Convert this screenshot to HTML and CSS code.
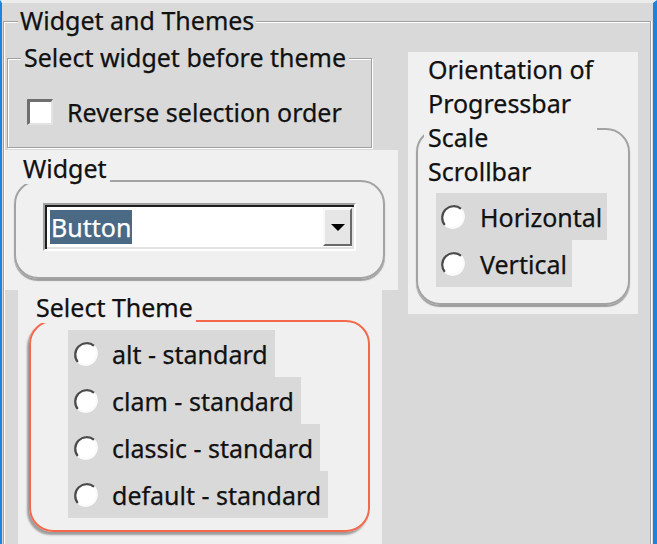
FILE: index.html
```html
<!DOCTYPE html>
<html>
<head>
<meta charset="utf-8">
<link rel="stylesheet" href="styles.css">
</head>
<body>
<div class="win">
  <div class="outer">
    <div class="outer-label">Widget and Themes</div>
    <div class="cols">
      <div class="left">
        <div class="lf1">
          <div class="lf1-label">Select widget before theme</div>
          <span class="check"></span>
          <span class="check-text">Reverse selection order</span>
        </div>
        <div class="widget-area">
          <div class="w-label">Widget</div>
          <div class="wframe">
            <div class="combo">
              <span class="sel">Button</span>
              <span class="arrow"><span class="tri"></span></span>
            </div>
          </div>
        </div>
        <div class="theme-area">
          <div class="t-label">Select Theme</div>
          <div class="tframe">
            <div class="radio"><svg width="26" height="26" viewBox="0 0 26 26"><circle cx="13" cy="13" r="11.5" fill="#fff"/><path d="M4.9 21.1A11.5 11.5 0 0 1 21.1 4.9" stroke="#4a4a4a" stroke-width="2.2" fill="none"/><path d="M21.1 4.9A11.5 11.5 0 0 1 4.9 21.1" stroke="#fafafa" stroke-width="2" fill="none"/></svg><span>alt - standard</span></div>
            <div class="radio"><svg width="26" height="26" viewBox="0 0 26 26"><circle cx="13" cy="13" r="11.5" fill="#fff"/><path d="M4.9 21.1A11.5 11.5 0 0 1 21.1 4.9" stroke="#4a4a4a" stroke-width="2.2" fill="none"/><path d="M21.1 4.9A11.5 11.5 0 0 1 4.9 21.1" stroke="#fafafa" stroke-width="2" fill="none"/></svg><span>clam - standard</span></div>
            <div class="radio"><svg width="26" height="26" viewBox="0 0 26 26"><circle cx="13" cy="13" r="11.5" fill="#fff"/><path d="M4.9 21.1A11.5 11.5 0 0 1 21.1 4.9" stroke="#4a4a4a" stroke-width="2.2" fill="none"/><path d="M21.1 4.9A11.5 11.5 0 0 1 4.9 21.1" stroke="#fafafa" stroke-width="2" fill="none"/></svg><span>classic - standard</span></div>
            <div class="radio"><svg width="26" height="26" viewBox="0 0 26 26"><circle cx="13" cy="13" r="11.5" fill="#fff"/><path d="M4.9 21.1A11.5 11.5 0 0 1 21.1 4.9" stroke="#4a4a4a" stroke-width="2.2" fill="none"/><path d="M21.1 4.9A11.5 11.5 0 0 1 4.9 21.1" stroke="#fafafa" stroke-width="2" fill="none"/></svg><span>default - standard</span></div>
          </div>
        </div>
      </div>
      <div class="orient">
        <div class="o-label">Orientation of<br>Progressbar<br>Scale<br>Scrollbar</div>
        <div class="oframe">
          <div class="radio o"><svg width="26" height="26" viewBox="0 0 26 26"><circle cx="13" cy="13" r="11.5" fill="#fff"/><path d="M4.9 21.1A11.5 11.5 0 0 1 21.1 4.9" stroke="#4a4a4a" stroke-width="2.2" fill="none"/><path d="M21.1 4.9A11.5 11.5 0 0 1 4.9 21.1" stroke="#fafafa" stroke-width="2" fill="none"/></svg><span>Horizontal</span></div>
          <div class="radio o"><svg width="26" height="26" viewBox="0 0 26 26"><circle cx="13" cy="13" r="11.5" fill="#fff"/><path d="M4.9 21.1A11.5 11.5 0 0 1 21.1 4.9" stroke="#4a4a4a" stroke-width="2.2" fill="none"/><path d="M21.1 4.9A11.5 11.5 0 0 1 4.9 21.1" stroke="#fafafa" stroke-width="2" fill="none"/></svg><span>Vertical</span></div>
        </div>
      </div>
    </div>
  </div>
</div>
</body>
</html>
```

FILE: styles.css
```css
* { box-sizing: border-box; }
html, body { margin: 0; padding: 0; }
body {
  width: 657px;
  height: 544px;
  overflow: hidden;
  background: #d9d9d9;
  font-family: "Noto Sans", "DejaVu Sans", sans-serif;
  font-size: 25px;
  color: #111;
  -webkit-text-stroke: 0.25px #111;
}
.win {
  height: 544px;
  border-left: 2px solid #1c84dc;
  border-right: 4px solid #1c84dc;
  border-top: 3px solid #ececec;
}
.outer {
  position: relative;
  margin: 18px 0 0 1px;
  width: 648px;
  height: 530px;
  border: 1px solid #a0a0a0;
  border-bottom: 0;
  box-shadow: inset 1px 1px 0 #fff, 1px 0 0 #fff;
}
.outer-label {
  position: absolute;
  left: 14px;
  top: -18px;
  line-height: 32px;
  padding: 0 2px;
  background: #d9d9d9;
}
.cols { display: flex; align-items: flex-start; }
.left { display: flex; flex-direction: column; align-items: flex-start; }
.lf1 {
  position: relative;
  display: flex;
  align-items: flex-start;
  margin: 36px 0 0 3px;
  width: 365px;
  height: 90px;
  padding: 40px 0 0 19px;
  border: 1px solid #a0a0a0;
  box-shadow: inset 1px 1px 0 #fff, 1px 1px 0 #fff;
}
.lf1-label {
  position: absolute;
  left: 13px;
  top: -18px;
  line-height: 32px;
  padding: 0 3px;
  background: #d9d9d9;
}
.check {
  flex: none;
  width: 26px;
  height: 26px;
  background: #fff;
  border-style: solid;
  border-width: 3px 2px 2px 3px;
  border-color: #6f6f6f #e3e3e3 #e3e3e3 #6f6f6f;
}
.check-text { margin-left: 14px; line-height: 26px; }
.widget-area {
  position: relative;
  margin: 2px 0 0 1px;
  width: 393px;
  height: 140px;
  padding: 30px 0 0 9px;
  background: #f0f0f0;
}
.w-label {
  position: absolute;
  left: 15px;
  top: 2px;
  line-height: 32px;
  padding: 0 3px;
  background: #f0f0f0;
}
.wframe {
  width: 371px;
  height: 99px;
  padding: 21px 0 0 27px;
  border: 2px solid #a3a3a3;
  border-radius: 24px;
  box-shadow: 0 2px 1px rgba(0,0,0,.35);
}
.combo {
  display: flex;
  align-items: center;
  width: 313px;
  height: 48px;
  padding: 0 2px 0 5px;
  background: #fff;
  border: 2px solid;
  border-color: #a0a0a0 #fff #fff #a0a0a0;
  box-shadow: inset 2px 2px 0 #1e1e1e, inset -2px -2px 0 #e3e3e3;
}
.sel {
  height: 34px;
  line-height: 34px;
  padding: 0 1px;
  background: #4a6984;
  color: #fff;
  -webkit-text-stroke: 0.25px #fff;
}
.arrow {
  display: flex;
  align-items: center;
  justify-content: center;
  margin-left: auto;
  width: 29px;
  height: 38px;
  background: #e6e6e6;
  border: 2px solid;
  border-color: #f8f8f8 #6a6a6a #6a6a6a #f8f8f8;
}
.tri {
  width: 0;
  height: 0;
  border-left: 7px solid transparent;
  border-right: 7px solid transparent;
  border-top: 7px solid #000;
}
.theme-area {
  position: relative;
  margin: 0 0 0 14px;
  width: 364px;
  height: 260px;
  padding: 30px 0 0 11px;
  background: #f0f0f0;
}
.t-label {
  position: absolute;
  left: 15px;
  top: 1px;
  line-height: 32px;
  padding: 0 3px;
  background: #f0f0f0;
}
.tframe {
  display: flex;
  flex-direction: column;
  align-items: flex-start;
  width: 341px;
  height: 212px;
  padding: 8px 0 0 37px;
  border: 2px solid #f4684c;
  border-radius: 24px;
  box-shadow: -2px 3px 2px rgba(0,0,0,.35);
}
.radio {
  display: flex;
  align-items: center;
  height: 47px;
  padding: 0 7px 0 5px;
  background: #d9d9d9;
}
.radio svg { flex: none; }
.radio span { margin-left: 13px; }
.radio.o { padding: 0 5px 0 4px; }
.radio.o span { margin-left: 14px; }
.orient {
  position: relative;
  margin: 30px 0 0 10px;
  width: 230px;
  height: 262px;
  padding: 76px 0 0 8px;
  background: #f0f0f0;
}
.o-label {
  position: absolute;
  left: 16px;
  top: 0;
  line-height: 34px;
  padding: 0 4px;
  background: #f0f0f0;
}
.oframe {
  display: flex;
  flex-direction: column;
  align-items: flex-start;
  width: 214px;
  height: 177px;
  padding: 63px 0 0 18px;
  border: 2px solid #a3a3a3;
  border-radius: 24px;
  box-shadow: 0 2px 1px rgba(0,0,0,.35);
}
```
